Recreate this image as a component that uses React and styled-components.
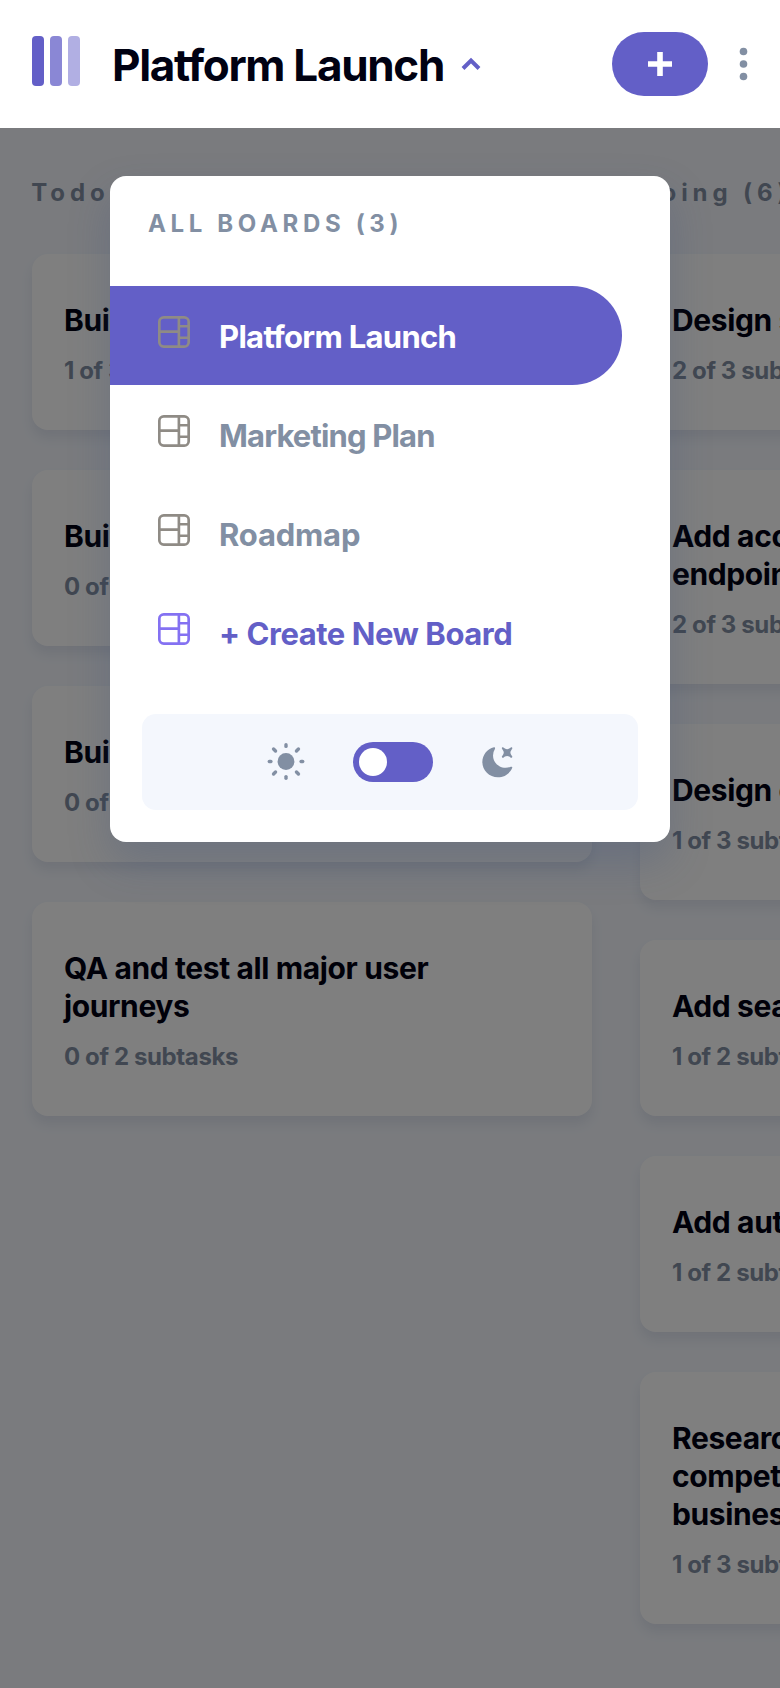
import React from "react";
import styled, { createGlobalStyle } from "styled-components";

const Global = createGlobalStyle`
  * { box-sizing: border-box; }
  body { margin: 0; background: #f4f7fd; font-family: Inter, "Open Sans", sans-serif; }
  h1, h2, h3, p, ul { margin: 0; padding: 0; }
  button { font: inherit; border: 0; padding: 0; background: none; }
`;

const Page = styled.div`
  width: 780px;
  height: 1688px;
  display: flex;
  flex-direction: column;
  overflow: hidden;
`;

const Header = styled.header`
  height: 128px;
  flex: none;
  display: flex;
  align-items: center;
  padding: 0 32px;
  background: #fff;
`;

const Logo = styled.div`
  display: flex;
  gap: 6px;
  margin-top: -6px;
`;

const LogoBar = styled.span`
  width: 12px;
  height: 50px;
  border-radius: 4px;
  background: #635fc7;
  opacity: ${(p) => p.$opacity};
`;

const BoardTitle = styled.h1`
  margin: 2px 0 0 32px;
  width: 332px;
  font-size: 44px;
  line-height: 60px;
  font-weight: 700;
  letter-spacing: -1.3px;
  white-space: nowrap;
  color: #000112;
`;

const Chevron = styled.svg`
  margin-left: 17px;
  flex: none;
`;

const AddButton = styled.button`
  width: 96px;
  height: 64px;
  margin-left: auto;
  border-radius: 32px;
  background: #635fc7;
  display: grid;
  place-items: center;
`;

const MoreButton = styled.button`
  margin: 0 0 0 31px;
  display: flex;
`;

const Board = styled.main`
  position: relative;
  flex: 1;
  display: flex;
  gap: 48px;
  padding: 48px 32px;
  overflow: hidden;
  background: #f4f7fd;
`;

const Column = styled.section`
  width: 560px;
  flex: none;
  display: flex;
  flex-direction: column;
  gap: 40px;
`;

const ColumnTitle = styled.h2`
  height: 38px;
  font-size: 24px;
  line-height: 33px;
  font-weight: 700;
  letter-spacing: 4.9px;
  text-indent: -0.7px;
  color: #828fa3;
  white-space: nowrap;
`;

const Card = styled.article`
  padding: 47px 32px 42px;
  border-radius: 16px;
  background: #fff;
  box-shadow: 0 8px 12px rgba(54, 78, 126, 0.1);
`;

const CardTitle = styled.h3`
  font-size: 30px;
  line-height: 38px;
  font-weight: 700;
  letter-spacing: -0.38px;
  white-space: pre-line;
  color: #000112;
`;

const CardMeta = styled.p`
  margin-top: 15px;
  font-size: 24px;
  line-height: 34px;
  font-weight: 700;
  letter-spacing: -0.38px;
  color: #828fa3;
`;

const Overlay = styled.div`
  position: absolute;
  inset: 0;
  display: flex;
  justify-content: center;
  align-items: flex-start;
  padding-top: 48px;
  background: rgba(0, 0, 0, 0.5);
`;

const Menu = styled.nav`
  width: 560px;
  height: 666px;
  border-radius: 16px;
  background: #fff;
  box-shadow: 0 20px 40px rgba(54, 78, 126, 0.25);
`;

const MenuTitle = styled.h2`
  height: 110px;
  padding: 31px 0 0 38px;
  font-size: 24px;
  line-height: 34px;
  font-weight: 700;
  letter-spacing: 4.65px;
  color: #828fa3;
`;

const MenuItem = styled.button`
  width: 512px;
  height: 99px;
  padding-left: 48px;
  display: flex;
  align-items: center;
  gap: 29px;
  border-radius: 0 50px 50px 0;
  background: ${(p) => (p.$active ? "#635fc7" : "transparent")};
  color: ${(p) => (p.$active ? "#fff" : p.$accent ? "#635fc7" : "#828fa3")};
  font-size: 31px;
  line-height: 40px;
  font-weight: 700;
  letter-spacing: ${(p) => p.$tracking}px;
  white-space: nowrap;

  svg {
    flex: none;
    margin-bottom: 7px;
    color: ${(p) => (p.$accent ? "#8471f2" : "#8f8b85")};
  }
`;

const ItemLabel = styled.span`
  margin-top: 3px;
`;

const ThemeBar = styled.div`
  height: 96px;
  margin: 32px 32px 0;
  display: flex;
  align-items: center;
  justify-content: center;
  gap: 48px;
  border-radius: 14px;
  background: #f4f7fd;
`;

const Toggle = styled.button`
  width: 80px;
  height: 40px;
  padding: 0 6px;
  display: flex;
  align-items: center;
  border-radius: 20px;
  background: #635fc7;
`;

const Knob = styled.span`
  width: 28px;
  height: 28px;
  border-radius: 50%;
  background: #fff;
`;

const BoardIcon = () => (
  <svg width="32" height="32" viewBox="0 0 16 16" fill="currentColor">
    <path d="M0 2.889A2.889 2.889 0 0 1 2.889 0H13.11A2.889 2.889 0 0 1 16 2.889V13.11A2.888 2.888 0 0 1 13.111 16H2.89A2.889 2.889 0 0 1 0 13.111V2.89Zm1.333 5.555v4.667c0 .859.697 1.556 1.556 1.556h6.889V8.444H1.333Zm8.445-1.333V1.333h-6.89A1.556 1.556 0 0 0 1.334 2.89V7.11h8.445Zm4.889-1.333H11.11v4.444h3.556V5.778Zm0 5.778H11.11v3.11h2a1.556 1.556 0 0 0 1.556-1.555v-1.555Zm0-7.112V2.89a1.555 1.555 0 0 0-1.556-1.556h-2v3.111h3.556Z" />
  </svg>
);

const SunIcon = () => (
  <svg width="38" height="38" viewBox="0 0 38 38" fill="#828fa3">
    <circle cx="19" cy="18.5" r="8.4" />
    {[0, 45, 90, 135, 180, 225, 270, 315].map((a) => (
      <rect key={a} x="17.3" y={a % 90 ? -0.8 : 0.1} width="3.4" height={a % 90 ? 6.2 : 5} rx="1.7" transform={`rotate(${a} 19 18.5)`} />
    ))}
  </svg>
);

const MoonIcon = () => (
  <svg width="32" height="32" viewBox="0 0 16 16" fill="#828fa3">
    <path d="M6.474.682c.434-.11.718.406.481.78A6.067 6.067 0 0 0 6.01 4.72c0 3.418 2.827 6.187 6.314 6.187.89.002 1.77-.182 2.584-.54.408-.18.894.165.724.57-1.16 2.775-3.944 4.73-7.194 4.73-4.292 0-7.771-3.41-7.771-7.615 0-3.541 2.466-6.518 5.807-7.37Zm8.433.07c.442-.294.969.232.674.674l-.525.787a1.943 1.943 0 0 0 0 2.157l.525.788c.295.441-.232.968-.674.673l-.787-.525a1.943 1.943 0 0 0-2.157 0l-.786.525c-.442.295-.97-.232-.675-.673l.525-.788a1.943 1.943 0 0 0 0-2.157l-.525-.787c-.295-.442.232-.968.674-.673l.787.525a1.943 1.943 0 0 0 2.157 0Z" />
  </svg>
);

const columns = [
  {
    title: "Todo (4)",
    tasks: [
      ["Build UI for onboarding flow", "1 of 3 subtasks"],
      ["Build UI for search", "0 of 1 subtasks"],
      ["Build settings UI", "0 of 2 subtasks"],
      ["QA and test all major user\njourneys", "0 of 2 subtasks"],
    ],
  },
  {
    title: "Doing (6)",
    tasks: [
      ["Design settings and search", "2 of 3 subtasks"],
      ["Add account management\nendpoints", "2 of 3 subtasks"],
      ["Design onboarding flow", "1 of 3 subtasks"],
      ["Add search endpoints", "1 of 2 subtasks"],
      ["Add authentication", "1 of 2 subtasks"],
      ["Research pricing points of\ncompetitors and trial\nbusiness models", "1 of 3 subtasks"],
    ],
  },
];

export default function App() {
  return (
    <Page>
      <Global />
      <Header>
        <Logo>
          <LogoBar $opacity={1} />
          <LogoBar $opacity={0.75} />
          <LogoBar $opacity={0.5} />
        </Logo>
        <BoardTitle>Platform Launch</BoardTitle>
        <Chevron width="20" height="14" viewBox="0 0 20 14" fill="none" stroke="#635fc7" strokeWidth="4">
          <path d="M2 11.5 10 3.5 18 11.5" />
        </Chevron>
        <AddButton aria-label="Add task">
          <svg width="24" height="24" viewBox="0 0 24 24" fill="#fff">
            <path d="M9.2 0h5.6v9.2H24v5.6h-9.2V24H9.2v-9.2H0V9.2h9.2z" />
          </svg>
        </AddButton>
        <MoreButton aria-label="Board options">
          <svg width="9" height="34" viewBox="0 0 9 34" fill="#828fa3">
            <circle cx="4.5" cy="4.5" r="3.8" />
            <circle cx="4.5" cy="17" r="3.8" />
            <circle cx="4.5" cy="29.5" r="3.8" />
          </svg>
        </MoreButton>
      </Header>
      <Board>
        {columns.map((column) => (
          <Column key={column.title}>
            <ColumnTitle>{column.title}</ColumnTitle>
            {column.tasks.map(([title, meta]) => (
              <Card key={title}>
                <CardTitle>{title}</CardTitle>
                <CardMeta>{meta}</CardMeta>
              </Card>
            ))}
          </Column>
        ))}
        <Overlay>
          <Menu>
            <MenuTitle>ALL BOARDS (3)</MenuTitle>
            <MenuItem $active $tracking={-0.7}>
              <BoardIcon />
              <ItemLabel>Platform Launch</ItemLabel>
            </MenuItem>
            <MenuItem $tracking={-0.85}>
              <BoardIcon />
              <ItemLabel>Marketing Plan</ItemLabel>
            </MenuItem>
            <MenuItem $tracking={-0.2}>
              <BoardIcon />
              <ItemLabel>Roadmap</ItemLabel>
            </MenuItem>
            <MenuItem $accent $tracking={-0.45}>
              <BoardIcon />
              <ItemLabel>+ Create New Board</ItemLabel>
            </MenuItem>
            <ThemeBar>
              <SunIcon />
              <Toggle aria-label="Toggle theme">
                <Knob />
              </Toggle>
              <MoonIcon />
            </ThemeBar>
          </Menu>
        </Overlay>
      </Board>
    </Page>
  );
}
